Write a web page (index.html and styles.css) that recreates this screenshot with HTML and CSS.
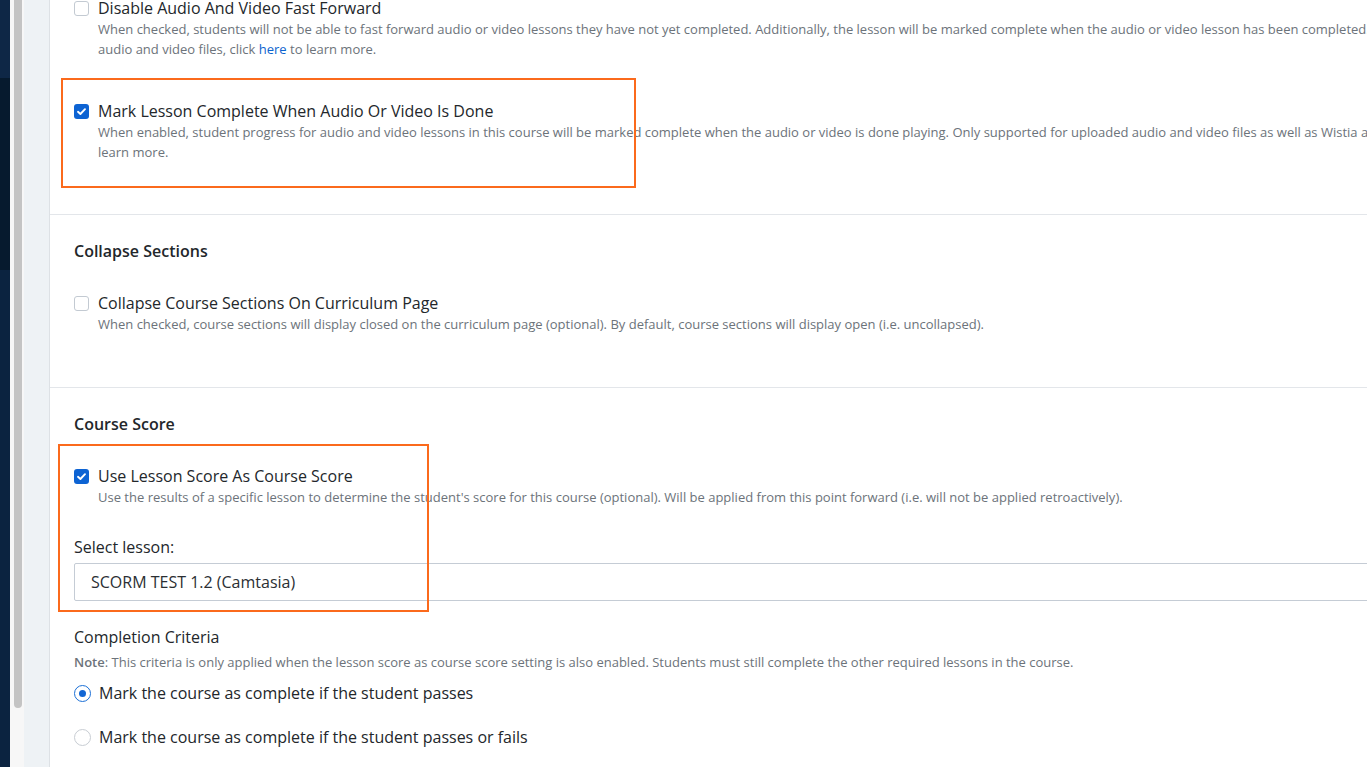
FILE: index.html
```html
<!DOCTYPE html>
<html lang="en">
<head>
<meta charset="utf-8">
<title>Course Settings</title>
<link rel="stylesheet" href="styles.css">
</head>
<body>
<div class="app">
  <aside class="sidebar">
    <div class="sb-top"></div>
    <div class="sb-mid"></div>
    <div class="sb-rest"></div>
  </aside>
  <div class="scroll-track"><div class="scroll-thumb"></div></div>
  <div class="gutter"></div>
  <main class="main">
    <section class="section section-first">
      <div class="option">
        <span class="checkbox"></span>
        <div class="option-body">
          <div class="option-title">Disable Audio And Video Fast Forward</div>
          <div class="option-desc">When checked, students will not be able to fast forward audio or video lessons they have not yet completed. Additionally, the lesson will be marked complete when the audio or video lesson has been completed. Only supported for uploaded<br>audio and video files, click <a class="link" href="#">here</a> to learn more.</div>
        </div>
      </div>
      <div class="option option-spaced annotated">
        <span class="annotation annotation-one"></span>
        <span class="checkbox checked"><svg viewBox="0 0 15 15" width="15" height="15"><path d="M4 7.8 L6.4 10 L11 5.2" fill="none" stroke="#fff" stroke-width="1.9" stroke-linecap="round" stroke-linejoin="round"/></svg></span>
        <div class="option-body">
          <div class="option-title">Mark Lesson Complete When Audio Or Video Is Done</div>
          <div class="option-desc">When enabled, student progress for audio and video lessons in this course will be marked complete when the audio or video is done playing. Only supported for uploaded audio and video files as well as Wistia and YouTube videos. Click here to<br>learn more.</div>
        </div>
      </div>
    </section>

    <section class="section section-mid">
      <h2 class="section-title">Collapse Sections</h2>
      <div class="option">
        <span class="checkbox"></span>
        <div class="option-body">
          <div class="option-title">Collapse Course Sections On Curriculum Page</div>
          <div class="option-desc">When checked, course sections will display closed on the curriculum page (optional). By default, course sections will display open (i.e. uncollapsed).</div>
        </div>
      </div>
    </section>

    <section class="section section-last">
      <h2 class="section-title">Course Score</h2>
      <div class="annotated">
        <span class="annotation annotation-two"></span>
        <div class="option">
          <span class="checkbox checked"><svg viewBox="0 0 15 15" width="15" height="15"><path d="M4 7.8 L6.4 10 L11 5.2" fill="none" stroke="#fff" stroke-width="1.9" stroke-linecap="round" stroke-linejoin="round"/></svg></span>
          <div class="option-body">
            <div class="option-title">Use Lesson Score As Course Score</div>
            <div class="option-desc">Use the results of a specific lesson to determine the student's score for this course (optional). Will be applied from this point forward (i.e. will not be applied retroactively).</div>
          </div>
        </div>
        <div class="field">
          <label class="field-label">Select lesson:</label>
          <div class="select">SCORM TEST 1.2 (Camtasia)</div>
        </div>
      </div>
      <div class="criteria">
        <div class="criteria-title">Completion Criteria</div>
        <div class="criteria-note"><b>Note</b>: This criteria is only applied when the lesson score as course score setting is also enabled. Students must still complete the other required lessons in the course.</div>
        <div class="radio-row"><span class="radio selected"></span><span class="radio-label">Mark the course as complete if the student passes</span></div>
        <div class="radio-row radio-row-second"><span class="radio"></span><span class="radio-label">Mark the course as complete if the student passes or fails</span></div>
      </div>
    </section>
  </main>
</div>
</body>
</html>
```

FILE: styles.css
```css
html, body {
  margin: 0;
  padding: 0;
  width: 1367px;
  height: 767px;
  overflow: hidden;
  background: #ffffff;
}

body {
  font-family: "Open Sans", "Noto Sans", sans-serif;
  color: #23272b;
}

.app {
  display: flex;
  height: 767px;
}

.sidebar {
  flex: 0 0 10px;
  display: flex;
  flex-direction: column;
}
.sb-top { height: 78px; background: #0e2746; }
.sb-mid { height: 192px; background: #061a2e; }
.sb-rest { flex: 1; background: #0b2340; }

.scroll-track {
  flex: 0 0 14px;
  background: #f7f7f7;
  box-sizing: border-box;
  padding: 0 2px 0 4px;
}
.scroll-thumb {
  height: 708px;
  background: #c4c4c4;
  border-radius: 0 0 4px 4px;
}

.gutter {
  flex: 0 0 25px;
  background: #eef2f5;
  border-right: 1px solid #dde1e5;
}

.main {
  flex: 0 0 auto;
  width: 1700px;
  background: #fff;
}

.section {
  padding: 25px 24px 52px 24px;
  border-bottom: 1px solid #e3e6ea;
}
.section-first {
  margin-top: -3px;
  padding-top: 0;
}
.section-mid {
  padding-bottom: 53px;
}
.section-last {
  border-bottom: none;
}

.section-title {
  margin: 0 0 30px 0;
  font-size: 16px;
  line-height: 22px;
  font-weight: 600;
  color: #23272b;
}

.option {
  display: grid;
  grid-template-columns: 24px 1fr;
  align-items: start;
}
.option-spaced {
  margin-top: 41px;
}

.annotated {
  position: relative;
}
.annotation {
  position: absolute;
  border: 2px solid #fb6a1c;
  box-sizing: border-box;
  pointer-events: none;
  z-index: 2;
}
.annotation-one {
  top: -22px;
  left: -13px;
  width: 575px;
  height: 110px;
}
.annotation-two {
  top: -21px;
  left: -16px;
  width: 371px;
  height: 168px;
}

.checkbox {
  width: 15px;
  height: 15px;
  margin-top: 4px;
  box-sizing: border-box;
  border: 1px solid #c3cad2;
  border-radius: 3px;
  background: #fff;
  display: block;
}
.checkbox.checked {
  border: none;
  background: #0d63d3;
}
.checkbox svg { display: block; }

.option-title {
  font-size: 16px;
  line-height: 22px;
  color: #23272b;
  white-space: nowrap;
}
.option-desc {
  font-size: 13px;
  line-height: 20px;
  color: #6c737a;
  white-space: nowrap;
}
.link {
  color: #0b63ce;
  text-decoration: none;
}

.field {
  margin-top: 29px;
}
.field-label {
  display: block;
  font-size: 16px;
  line-height: 22px;
  color: #23272b;
  margin-bottom: 5px;
}
.select {
  height: 38px;
  box-sizing: border-box;
  border: 1px solid #c5ccd5;
  border-radius: 2px;
  padding: 0 16px;
  font-size: 16px;
  line-height: 37px;
  color: #2b2f33;
}

.criteria {
  margin-top: 25px;
}
.criteria-title {
  font-size: 16px;
  line-height: 22px;
  color: #23272b;
}
.criteria-note {
  margin-top: 4px;
  font-size: 13px;
  line-height: 20px;
  color: #6c737a;
  white-space: nowrap;
}
.criteria-note b {
  font-weight: 600;
}

.radio-row {
  margin-top: 10px;
  display: flex;
  align-items: center;
  height: 22px;
}
.radio-row-second {
  margin-top: 22px;
}
.radio {
  width: 17px;
  height: 17px;
  box-sizing: border-box;
  border: 1px solid #c8cdd3;
  border-radius: 50%;
  margin-right: 8px;
  flex: none;
  display: flex;
  align-items: center;
  justify-content: center;
}
.radio.selected {
  border-color: #1b6fd6;
}
.radio.selected::after {
  content: "";
  width: 7px;
  height: 7px;
  border-radius: 50%;
  background: #1166d4;
}
.radio-label {
  font-size: 16px;
  line-height: 22px;
  color: #23272b;
  white-space: nowrap;
}
```
